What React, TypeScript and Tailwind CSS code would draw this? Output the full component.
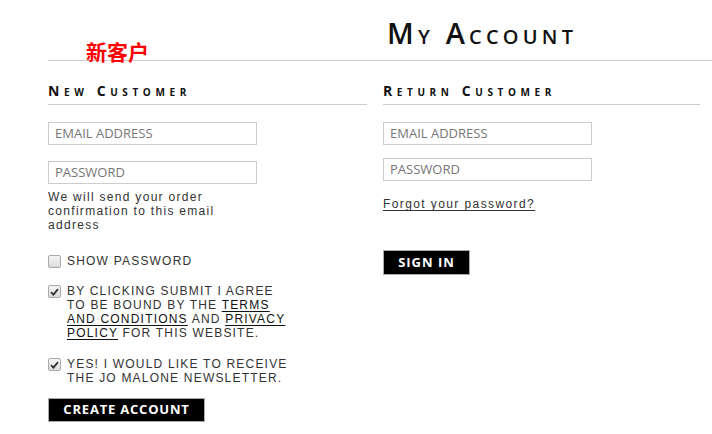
import React from "react";

const Box: React.FC<{ checked?: boolean }> = ({ checked }) => (
  <span className="mt-[1px] flex h-[13px] w-[13px] shrink-0 items-center justify-center rounded-[2px] border border-[#a9a9a9] bg-gradient-to-b from-[#f4f4f4] to-[#dcdcdc]">
    {checked && (
      <svg width="9" height="8" viewBox="0 0 9 8">
        <path d="M1 4.2 L3.4 6.6 L8 1.2" fill="none" stroke="#333" strokeWidth="1.8" />
      </svg>
    )}
  </span>
);

const Field: React.FC<{ label: string; className?: string }> = ({ label, className }) => (
  <div
    className={
      "flex h-[23px] w-[209px] items-center border border-[#cccccc] bg-white px-[6px] text-[13px] text-[#767676] font-['Open_Sans',sans-serif] " +
      (className ?? "")
    }
  >
    {label}
  </div>
);

const Heading: React.FC<{ children: React.ReactNode }> = ({ children }) => (
  <h2 className="mt-[22px] border-b border-[#cccccc] pb-[5px] text-[14px] leading-[16px] font-bold tracking-[4.6px] text-[#111] [font-variant:small-caps] font-['Open_Sans',sans-serif]">
    {children}
  </h2>
);

export default function App() {
  const body = "font-['Liberation_Sans',Arial,sans-serif] text-[12px] leading-[14px] text-[#333]";
  return (
    <div className="relative min-h-[434px] w-[712px] bg-white">
      <span className="absolute left-[86px] top-[37px] text-[21px] font-bold leading-[28px] text-[#ff0000] font-['Noto_Sans_CJK_SC',sans-serif]">
        新客户
      </span>
      <div className="ml-12 border-b border-[#cccccc] pt-[15px] pb-[10px]">
        <h1 className="pl-[339px] text-[29px] leading-[35px] font-semibold tracking-[4.2px] text-[#111] [font-variant:small-caps] font-['Open_Sans',sans-serif]">
          My Account
        </h1>
      </div>

      <div className="grid grid-cols-[319px_1fr] gap-4 pl-12 pr-3">
        <section>
          <Heading>New Customer</Heading>
          <Field label="EMAIL ADDRESS" className="mt-[17px]" />
          <Field label="PASSWORD" className="mt-[16px]" />
          <p className={body + " mt-[6px] w-[209px] tracking-[1.3px]"}>
            We will send your order confirmation to this email address
          </p>

          <label className={body + " mt-[22px] flex gap-[6px] tracking-[1.2px]"}>
            <Box />
            <span>SHOW PASSWORD</span>
          </label>

          <label className={body + " mt-[16px] flex gap-[6px] tracking-[1.2px]"}>
            <Box checked />
            <span className="w-[224px]">
              BY CLICKING SUBMIT I AGREE TO BE BOUND BY THE{" "}
              <a className="text-[#111] underline underline-offset-[2px]">TERMS AND CONDITIONS</a> AND{" "}
              <a className="text-[#111] underline underline-offset-[2px]">PRIVACY POLICY</a> FOR THIS WEBSITE.
            </span>
          </label>

          <label className={body + " mt-[17px] flex gap-[6px] tracking-[1.2px]"}>
            <Box checked />
            <span className="w-[224px]">YES! I WOULD LIKE TO RECEIVE THE JO MALONE NEWSLETTER.</span>
          </label>

          <button className="mt-[13px] flex h-[24px] w-[157px] items-center justify-center border border-[#aaaaaa] bg-black text-[13px] font-bold tracking-[0.8px] text-white font-['Open_Sans',sans-serif]">
            CREATE ACCOUNT
          </button>
        </section>

        <section>
          <Heading>Return Customer</Heading>
          <Field label="EMAIL ADDRESS" className="mt-[17px]" />
          <Field label="PASSWORD" className="mt-[13px]" />
          <a className={body + " mt-[16px] inline-block tracking-[1.4px] text-[#111] underline underline-offset-[2px]"}>
            Forgot your password?
          </a>
          <button className="mt-[36px] flex h-[25px] w-[87px] items-center justify-center border border-[#aaaaaa] bg-black text-[13px] font-bold tracking-[1px] text-white font-['Open_Sans',sans-serif]">
            SIGN IN
          </button>
        </section>
      </div>
    </div>
  );
}
